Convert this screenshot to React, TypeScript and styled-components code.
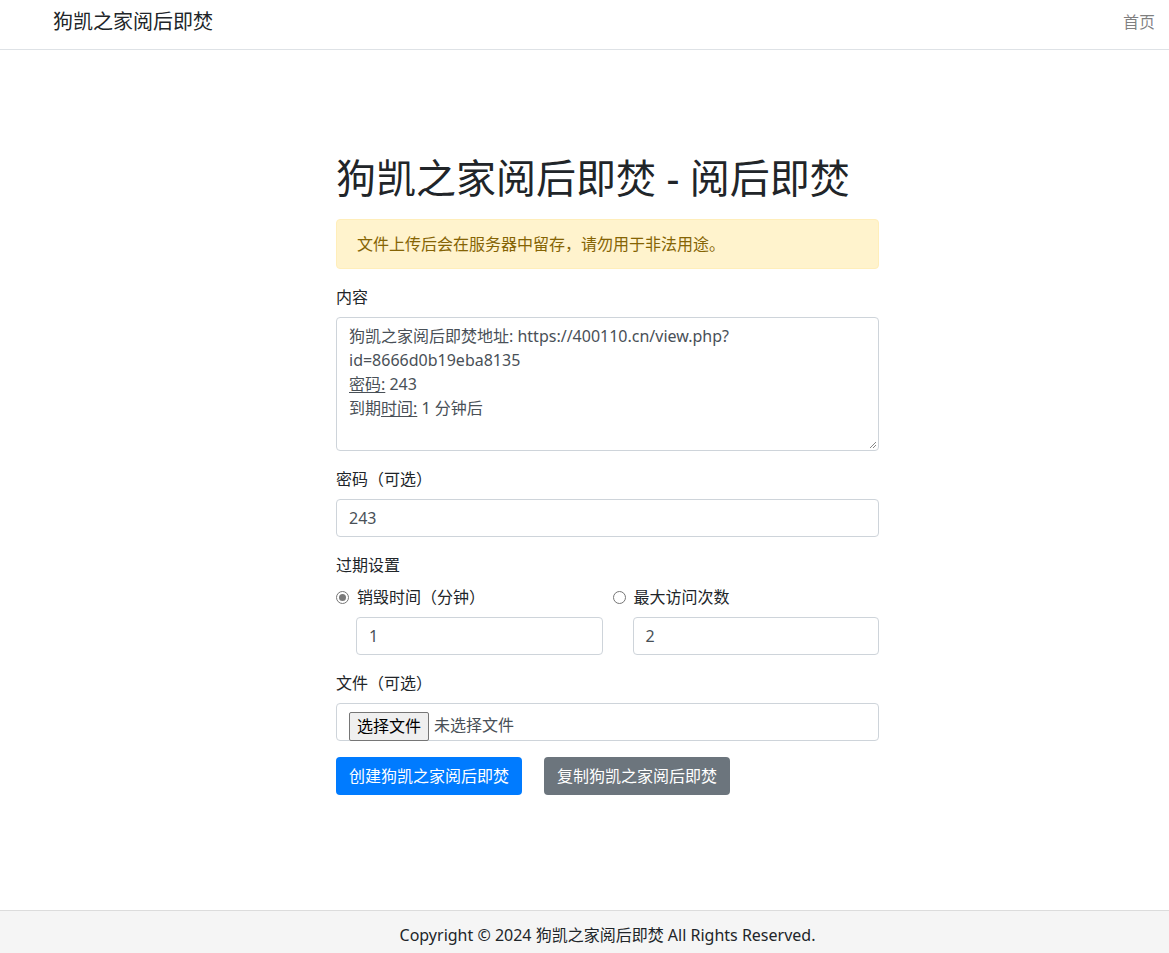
import React from 'react';
import styled, { createGlobalStyle } from 'styled-components';

const GlobalStyle = createGlobalStyle`
  html, body { margin: 0; padding: 0; }
  body {
    font-family: "Noto Sans", "Noto Sans CJK SC", sans-serif;
    font-size: 16px;
    line-height: 1.5;
    color: #212529;
    background: #fff;
  }
  * { box-sizing: border-box; }
`;

const Page = styled.div`
  min-height: 100vh;
  display: flex;
  flex-direction: column;
`;

const Navbar = styled.nav`
  height: 50px;
  border-bottom: 1px solid #dee2e6;
  display: flex;
  align-items: center;
  justify-content: space-between;
  padding: 0 14px 6px 53px;
`;

const Brand = styled.a`
  font-size: 20px;
  color: #212529;
  text-decoration: none;
`;

const NavLink = styled.a`
  font-size: 16px;
  color: rgba(0, 0, 0, 0.5);
  text-decoration: none;
`;

const Main = styled.main`
  flex: 1;
  width: 543px;
  margin-left: 336px;
  padding-top: 104px;
`;

const Title = styled.h1`
  font-size: 40px;
  font-weight: 400;
  line-height: 48px;
  margin: 0 0 17px;
`;

const Alert = styled.div`
  background: #fff3cd;
  border: 1px solid #ffeeba;
  color: #856404;
  border-radius: 4px;
  padding: 12px 20px;
  margin-bottom: 16px;
`;

const Group = styled.div`
  margin-bottom: 16px;
`;

const Label = styled.label`
  display: block;
  margin-bottom: 8px;
`;

const Control = styled.div<{ $indent?: boolean }>`
  height: 38px;
  border: 1px solid #ced4da;
  border-radius: 4px;
  padding: 6px 12px;
  color: #495057;
  margin-left: ${p => (p.$indent ? '20px' : '0')};
`;

const TextArea = styled.div`
  position: relative;
  height: 134px;
  border: 1px solid #ced4da;
  border-radius: 4px;
  padding: 6px 12px;
  color: #495057;
  line-height: 24px;
`;

const Marked = styled.span`
  text-decoration: underline;
  text-underline-offset: 2px;
`;

const Grip = styled.svg`
  position: absolute;
  right: 1px;
  bottom: 1px;
`;

const Cols = styled.div`
  display: grid;
  grid-template-columns: 1fr 1fr;
  column-gap: 10px;
`;

const RadioRow = styled.div`
  display: flex;
  align-items: center;
  gap: 8px;
  height: 24px;
  margin-bottom: 8px;
`;

const Radio = styled.span<{ $checked?: boolean }>`
  width: 13px;
  height: 13px;
  border-radius: 50%;
  border: 1px solid #767676;
  display: flex;
  align-items: center;
  justify-content: center;
  &::after {
    content: '';
    width: 7px;
    height: 7px;
    border-radius: 50%;
    background: ${p => (p.$checked ? '#7a7a7a' : 'transparent')};
  }
`;

const FileBox = styled(Control)`
  display: flex;
  align-items: center;
  padding: 6px 12px 0;
  gap: 5px;
`;

const FileButton = styled.span`
  height: 29px;
  margin-top: 2px;
  padding: 0 7px;
  background: #efefef;
  border: 1px solid #767676;
  border-radius: 2px;
  color: #000;
  display: flex;
  align-items: center;
  font-size: 16px;
`;

const Actions = styled.div`
  display: flex;
  gap: 22px;
`;

const Button = styled.button<{ $variant: 'primary' | 'secondary' }>`
  height: 38px;
  padding: 0 13px;
  border: none;
  border-radius: 4px;
  font: inherit;
  color: #fff;
  background: ${p => (p.$variant === 'primary' ? '#007bff' : '#6c757d')};
`;

const Footer = styled.footer`
  height: 43px;
  border-top: 1px solid #dcdcdc;
  background: #f5f5f5;
  padding-top: 12px;
`;

const FooterText = styled.div`
  width: 543px;
  margin-left: 336px;
  text-align: center;
`;

export default function App() {
  return (
    <Page>
      <GlobalStyle />
      <Navbar>
        <Brand href="#">狗凯之家阅后即焚</Brand>
        <NavLink href="#">首页</NavLink>
      </Navbar>
      <Main>
        <Title>狗凯之家阅后即焚 - 阅后即焚</Title>
        <Alert>文件上传后会在服务器中留存，请勿用于非法用途。</Alert>
        <Group>
          <Label>内容</Label>
          <TextArea>
            狗凯之家阅后即焚地址: https://400110.cn/view.php?
            <br />
            id=8666d0b19eba8135
            <br />
            <Marked>密码:</Marked> 243
            <br />
            到期<Marked>时间:</Marked> 1 分钟后
            <Grip width="10" height="10" viewBox="0 0 10 10">
              <path d="M9 3 L3 9 M9 6 L6 9" stroke="#888" strokeWidth="1" />
            </Grip>
          </TextArea>
        </Group>
        <Group>
          <Label>密码（可选）</Label>
          <Control>243</Control>
        </Group>
        <Group>
          <Label>过期设置</Label>
          <Cols>
            <div>
              <RadioRow>
                <Radio $checked />
                <span>销毁时间（分钟）</span>
              </RadioRow>
              <Control $indent>1</Control>
            </div>
            <div>
              <RadioRow>
                <Radio />
                <span>最大访问次数</span>
              </RadioRow>
              <Control $indent>2</Control>
            </div>
          </Cols>
        </Group>
        <Group>
          <Label>文件（可选）</Label>
          <FileBox>
            <FileButton>选择文件</FileButton>
            <span>未选择文件</span>
          </FileBox>
        </Group>
        <Actions>
          <Button $variant="primary">创建狗凯之家阅后即焚</Button>
          <Button $variant="secondary">复制狗凯之家阅后即焚</Button>
        </Actions>
      </Main>
      <Footer>
        <FooterText>Copyright © 2024 狗凯之家阅后即焚 All Rights Reserved.</FooterText>
      </Footer>
    </Page>
  );
}
